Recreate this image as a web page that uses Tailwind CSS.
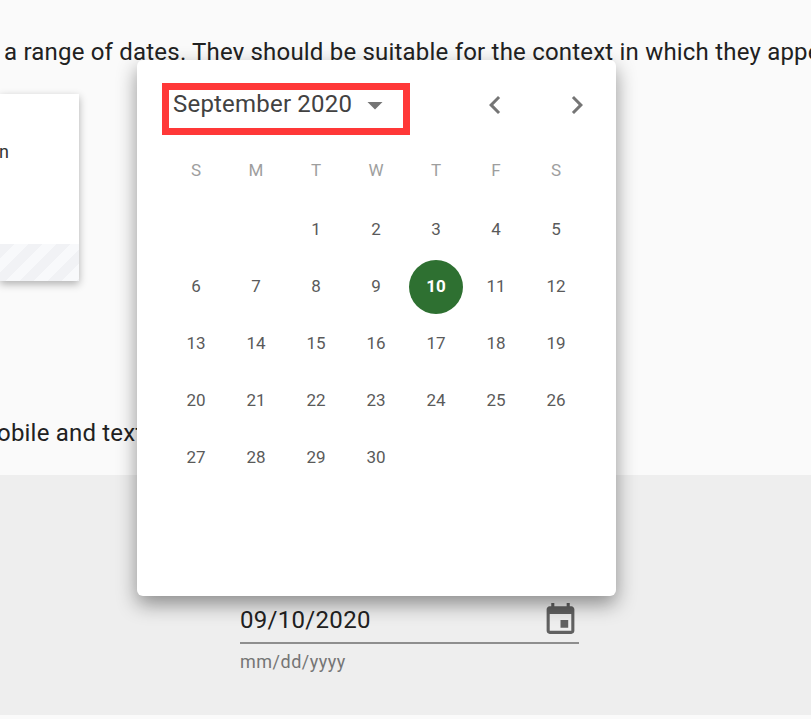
<!DOCTYPE html>
<html lang="en">
<head>
  <meta charset="UTF-8" />
  <meta name="viewport" content="width=device-width, initial-scale=1.0" />
  <title>Date picker</title>
  <script src="https://cdn.jsdelivr.net/npm/@tailwindcss/browser@4"></script>
</head>
<body class="bg-[#fafafa] h-screen overflow-hidden relative font-['Roboto',sans-serif] text-[#212121]">
  <!-- page behind the popup -->
  <section class="h-[475px] bg-[#fafafa] flex flex-col overflow-hidden">
    <p class="pl-[4px] pt-[36px] text-[24px] leading-[32px] tracking-[0.2px] whitespace-nowrap">a range of dates. They should be suitable for the context in which they appear.</p>
    <div class="mt-[26px] w-[79px] h-[187px] shrink-0 bg-white shadow-[0_3px_8px_rgba(0,0,0,0.3)] flex flex-col justify-between overflow-hidden">
      <div class="mt-[45px] text-[18px] leading-[26px] -ml-[1px] text-[#333]">n</div>
      <div class="h-[37px] bg-[repeating-linear-gradient(135deg,#f1f2f5_0,#f1f2f5_10px,#f8f9fb_10px,#f8f9fb_20px)]"></div>
    </div>
    <p class="mt-[136px] -ml-[3px] text-[24px] leading-[32px] tracking-[0.2px] whitespace-nowrap">obile and text</p>
  </section>

  <section class="h-[240px] bg-[#eeeeee] flex justify-center">
    <div class="w-[339px] mt-[127px] ml-[8px]">
      <div class="flex items-center justify-between h-[42px] border-b-2 border-[#8e8e8e]">
        <span class="text-[24px] leading-[32px] tracking-[0.3px] mb-[4px]">09/10/2020</span>
        <svg class="w-[37px] h-[37px] mb-[7px]" viewBox="0 0 24 24" fill="#616161"><path d="M19 4h-1V2h-2v2H8V2H6v2H5c-1.11 0-2 .9-2 2v14c0 1.1.89 2 2 2h14c1.1 0 2-.9 2-2V6c0-1.1-.9-2-2-2zm0 16H5V9h14v11zm-2-7h-5v5h5v-5z"/></svg>
      </div>
      <div class="mt-[6px] text-[18px] leading-[24px] text-[#757575] tracking-[0.5px]">mm/dd/yyyy</div>
    </div>
  </section>

  <!-- popup -->
  <div class="absolute left-[137px] top-[60px] w-[479px] h-[536px] bg-white rounded-[6px] shadow-[0_8px_20px_rgba(0,0,0,0.42)] px-[29px]">
    <div class="flex items-center justify-between h-[60px] mt-[19px]">
      <div class="relative w-[248px] h-[52px] -ml-[4px] border-[7px] border-[#ff3838]">
        <span class="absolute left-[4px] top-[0px] text-[24px] leading-[28px] tracking-[0.2px] text-[#424242] whitespace-nowrap">September 2020</span>
        <svg class="absolute left-[188px] top-[-3px] w-[36px] h-[36px]" viewBox="0 0 24 24" fill="#757575"><path d="M7 10l5 5 5-5z"/></svg>
      </div>
      <div class="flex items-center gap-[46px] -mr-[8px] mb-[8px]">
        <svg class="w-[36px] h-[36px]" viewBox="0 0 24 24" fill="#757575"><path d="M15.41 7.41 14 6l-6 6 6 6 1.41-1.41L10.83 12z"/></svg>
        <svg class="w-[36px] h-[36px]" viewBox="0 0 24 24" fill="#757575"><path d="M10 6 8.59 7.41 13.17 12l-4.58 4.59L10 18l6-6z"/></svg>
      </div>
    </div>

    <div class="grid grid-cols-[repeat(7,60px)] mt-[18px] text-center text-[17px] leading-[26px] text-[#9e9e9e]">
      <div>S</div><div>M</div><div>T</div><div>W</div><div>T</div><div>F</div><div>S</div>
    </div>

    <div class="grid grid-cols-[repeat(7,60px)] auto-rows-[57px] mt-[18px] items-center justify-items-center text-[17px] text-[#5a5a5a]">
      <div></div><div></div><div>1</div><div>2</div><div>3</div><div>4</div><div>5</div>
      <div>6</div><div>7</div><div>8</div><div>9</div>
      <div class="w-[54px] h-[54px] rounded-full bg-[#2e7031] text-white font-bold flex items-center justify-center">10</div>
      <div>11</div><div>12</div>
      <div>13</div><div>14</div><div>15</div><div>16</div><div>17</div><div>18</div><div>19</div>
      <div>20</div><div>21</div><div>22</div><div>23</div><div>24</div><div>25</div><div>26</div>
      <div>27</div><div>28</div><div>29</div><div>30</div>
    </div>
  </div>
</body>
</html>
